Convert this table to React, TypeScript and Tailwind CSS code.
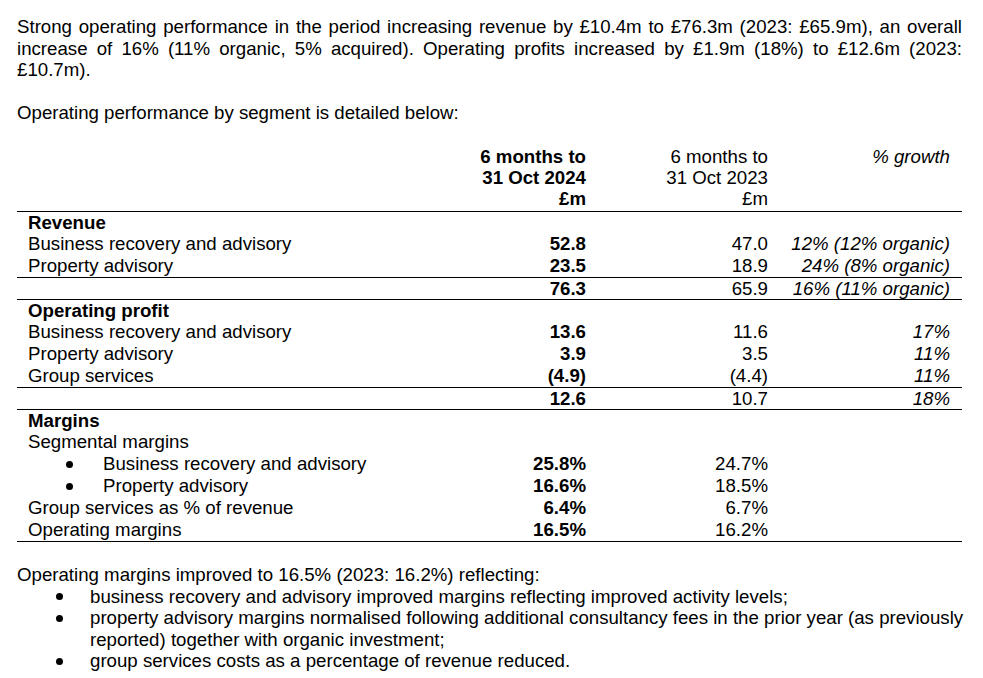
import React from "react";

type Row = {
  label: React.ReactNode;
  a?: string;
  b?: string;
  c?: string;
  bold?: boolean;
  bullet?: boolean;
  border?: boolean;
};

const cols = "grid grid-cols-[449px_120px_182px_182px_12px]";

function Dot() {
  return <span className="inline-block w-[7px] h-[7px] rounded-full bg-black" />;
}

function TRow({ label, a, b, c, bold, bullet, border }: Row) {
  return (
    <div className={`${cols} h-[22px] leading-[22px] ${border ? "border-t border-black" : ""}`}>
      <div className={`pl-[11px] flex whitespace-nowrap ${bold ? "font-bold" : ""}`}>
        {bullet ? (
          <>
            <span className="ml-[38px] w-[37px] flex items-center pt-[1px]">
              <Dot />
            </span>
            <span>{label}</span>
          </>
        ) : (
          label
        )}
      </div>
      <div className="text-right font-bold whitespace-nowrap">{a}</div>
      <div className="text-right whitespace-nowrap">{b}</div>
      <div className="text-right italic whitespace-nowrap">{c}</div>
      <div />
    </div>
  );
}

export default function App() {
  return (
    <div
      className="w-[983px] h-[678px] bg-white text-black overflow-hidden text-[18.67px] leading-[21.5px]"
      style={{ fontFamily: '"Liberation Sans", Arial, sans-serif' }}
    >
      <div className="pt-[16px] pl-[17px] pr-[21px]">
        <p className="text-justify">
          Strong operating performance in the period increasing revenue by £10.4m to £76.3m (2023: £65.9m), an overall
          increase of 16% (11% organic, 5% acquired). Operating profits increased by £1.9m (18%) to £12.6m (2023:
          £10.7m).
        </p>
        <p className="mt-[21px]">Operating performance by segment is detailed below:</p>
      </div>

      <div className="ml-[17px] w-[945px] mt-[23px]">
        <div className={`${cols} leading-[21px]`}>
          <div />
          <div className="text-right font-bold whitespace-nowrap pb-[2px]">
            <div>6 months to</div>
            <div>31 Oct 2024</div>
            <div>£m</div>
          </div>
          <div className="text-right whitespace-nowrap">
            <div>6 months to</div>
            <div>31 Oct 2023</div>
            <div>£m</div>
          </div>
          <div className="text-right italic whitespace-nowrap">
            <div>% growth</div>
          </div>
          <div />
        </div>

        <TRow label="Revenue" bold border />
        <TRow label="Business recovery and advisory" a="52.8" b="47.0" c="12% (12% organic)" />
        <TRow label="Property advisory" a="23.5" b="18.9" c="24% (8% organic)" />
        <TRow label="" a="76.3" b="65.9" c="16% (11% organic)" border />

        <TRow label="Operating profit" bold border />
        <TRow label="Business recovery and advisory" a="13.6" b="11.6" c="17%" />
        <TRow label="Property advisory" a="3.9" b="3.5" c="11%" />
        <TRow label="Group services" a="(4.9)" b="(4.4)" c="11%" />
        <TRow label="" a="12.6" b="10.7" c="18%" border />

        <TRow label="Margins" bold border />
        <TRow label="Segmental margins" />
        <TRow label="Business recovery and advisory" a="25.8%" b="24.7%" bullet />
        <TRow label="Property advisory" a="16.6%" b="18.5%" bullet />
        <TRow label="Group services as % of revenue" a="6.4%" b="6.7%" />
        <TRow label="Operating margins" a="16.5%" b="16.2%" />
        <div className="border-t border-black" />
      </div>

      <div className="pl-[17px] pr-[18px] mt-[22px]">
        <p>Operating margins improved to 16.5% (2023: 16.2%) reflecting:</p>
        <ul>
          {[
            "business recovery and advisory improved margins reflecting improved activity levels;",
            "property advisory margins normalised following additional consultancy fees in the prior year (as previously reported) together with organic investment;",
            "group services costs as a percentage of revenue reduced.",
          ].map((t, i) => (
            <li key={i} className="flex">
              <span className="ml-[39px] w-[34px] shrink-0 h-[21.5px] flex items-center pt-[1px]">
                <Dot />
              </span>
              <span>{t}</span>
            </li>
          ))}
        </ul>
      </div>
    </div>
  );
}
